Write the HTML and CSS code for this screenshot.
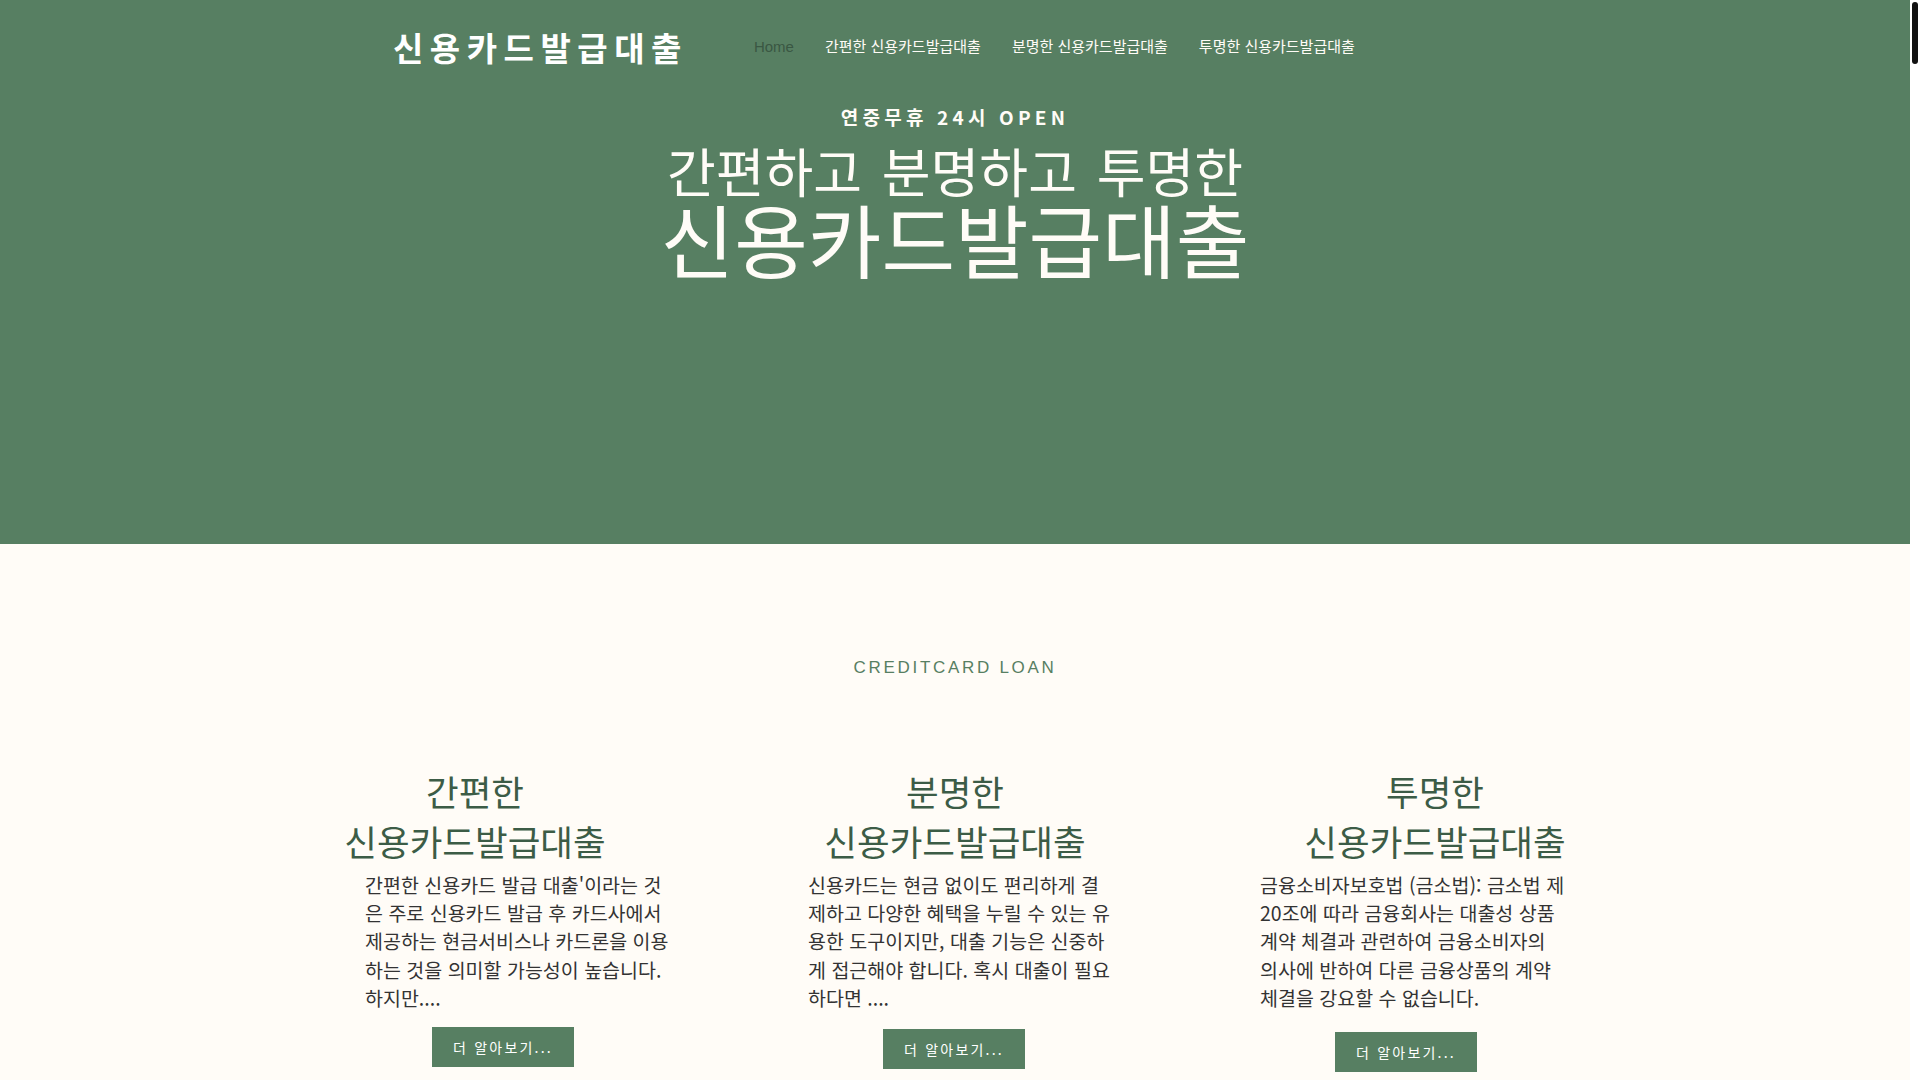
FILE: index.html
```html
<!DOCTYPE html>
<html lang="ko">
<head>
<meta charset="utf-8">
<title>신용카드발급대출</title>
<link rel="stylesheet" href="styles.css">
</head>
<body>
<section class="hero">
  <header class="header">
    <div class="logo">신용카드발급대출</div>
    <nav class="nav">
      <a class="nav-item active">Home</a>
      <a class="nav-item">간편한 신용카드발급대출</a>
      <a class="nav-item">분명한 신용카드발급대출</a>
      <a class="nav-item">투명한 신용카드발급대출</a>
    </nav>
  </header>
  <p class="tagline">연중무휴 24시 OPEN</p>
  <h1 class="hero-title">
    <span class="line1">간편하고 분명하고 투명한</span>
    <span class="line2">신용카드발급대출</span>
  </h1>
</section>
<main class="content">
  <p class="label">CREDITCARD LOAN</p>
  <div class="cards">
    <div class="card card-a">
      <h2 class="card-title">간편한<br>신용카드발급대출</h2>
      <p class="card-body">간편한 신용카드 발급 대출'이라는 것<br>은 주로 신용카드 발급 후 카드사에서<br>제공하는 현금서비스나 카드론을 이용<br>하는 것을 의미할 가능성이 높습니다.<br>하지만....</p>
      <a class="btn">더 알아보기...</a>
    </div>
    <div class="card card-b">
      <h2 class="card-title">분명한<br>신용카드발급대출</h2>
      <p class="card-body">신용카드는 현금 없이도 편리하게 결<br>제하고 다양한 혜택을 누릴 수 있는 유<br>용한 도구이지만, 대출 기능은 신중하<br>게 접근해야 합니다. 혹시 대출이 필요<br>하다면 ....</p>
      <a class="btn">더 알아보기...</a>
    </div>
    <div class="card card-c">
      <h2 class="card-title">투명한<br>신용카드발급대출</h2>
      <p class="card-body">금융소비자보호법 (금소법): 금소법 제<br>20조에 따라 금융회사는 대출성 상품<br>계약 체결과 관련하여 금융소비자의<br>의사에 반하여 다른 금융상품의 계약<br>체결을 강요할 수 없습니다.</p>
      <a class="btn">더 알아보기...</a>
    </div>
  </div>
</main>
<div class="scrollbar"><div class="scroll-thumb"></div></div>
</body>
</html>
```
FILE: styles.css
```css
html {
  background: #fffcf7;
}
body {
  margin: 0 10px 0 0;
  font-family: "Noto Sans CJK KR", "Noto Sans", sans-serif;
  background: #fffcf7;
  color: #333333;
  overflow: hidden;
}
.scrollbar {
  position: fixed;
  top: 0;
  right: 0;
  width: 10px;
  height: 100vh;
  background: #ffffff;
}
.scroll-thumb {
  margin: 2px 0 0 2px;
  width: 6px;
  height: 62px;
  border-radius: 3px;
  background: #111111;
}
.hero {
  background: #577f62;
  height: 544px;
  box-sizing: border-box;
  display: flex;
  flex-direction: column;
  align-items: center;
  color: #fffcf7;
}
.header {
  width: 1124px;
  height: 94px;
  display: flex;
  align-items: center;
}
.logo {
  font-size: 33px;
  font-weight: 700;
  letter-spacing: 6.5px;
  line-height: 40px;
  color: #ffffff;
}
.nav {
  display: flex;
  gap: 31px;
  margin-left: 66px;
}
.nav-item {
  font-family: "Liberation Sans", "Noto Sans CJK KR", sans-serif;
  font-size: 15px;
  line-height: 20px;
  color: #fffcf7;
  text-decoration: none;
}
.nav-item.active {
  color: #3a5743;
}
.tagline {
  margin: 11px 0 0;
  font-size: 19px;
  line-height: 24px;
  font-weight: 700;
  letter-spacing: 4.2px;
}
.hero-title {
  margin: 9px 0 0;
  font-weight: 400;
  text-align: center;
  display: flex;
  flex-direction: column;
  align-items: center;
}
.line1 {
  font-size: 53px;
  line-height: 64px;
  word-spacing: 5px;
}
.line2 {
  font-size: 80px;
  line-height: 70px;
}
.content {
  display: flex;
  flex-direction: column;
  align-items: center;
}
.label {
  margin: 114px 0 0;
  font-family: "Liberation Sans", sans-serif;
  font-size: 17px;
  line-height: 20px;
  letter-spacing: 2.7px;
  color: #577f62;
}
.cards {
  margin-top: 88px;
  width: 1440px;
  display: grid;
  grid-template-columns: repeat(3, 480px);
}
.card {
  display: flex;
  flex-direction: column;
}
.card-title {
  margin: 0;
  font-size: 35.5px;
  line-height: 50px;
  font-weight: 400;
  text-align: center;
  color: #3c5c46;
}
.card-body {
  margin: 5px 0 0;
  width: 330px;
  font-size: 19.5px;
  line-height: 28.2px;
  color: #333333;
  white-space: nowrap;
}
.btn {
  width: 142px;
  height: 40px;
  display: flex;
  align-items: center;
  justify-content: center;
  background: #577f62;
  color: #ffffff;
  font-size: 14px;
  letter-spacing: 2.2px;
  text-decoration: none;
}
.card-a .card-body { margin-left: 130px; }
.card-a .btn { margin: 15px 0 0 197px; }
.card-b .card-body { margin-left: 93px; }
.card-b .btn { margin: 17px 0 0 168px; }
.card-c .card-body { margin-left: 65px; }
.card-c .btn { margin: 20px 0 0 140px; }
```
